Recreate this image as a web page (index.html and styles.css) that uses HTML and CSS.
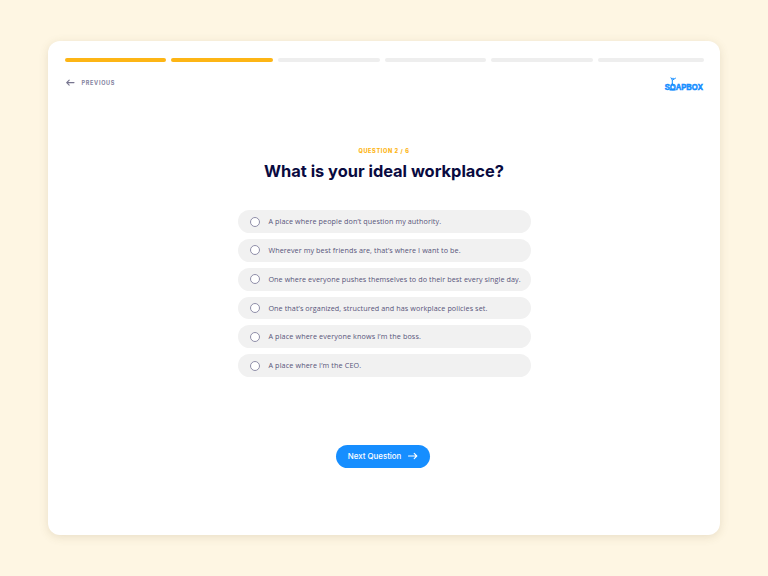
FILE: index.html
```html
<!DOCTYPE html>
<html lang="en">
<head>
<meta charset="utf-8">
<title>Soapbox quiz</title>
<link rel="stylesheet" href="styles.css">
</head>
<body>
<main class="card">
  <div class="progress">
    <span class="step done"></span><span class="step done"></span><span class="step"></span><span class="step"></span><span class="step"></span><span class="step"></span>
  </div>
  <header class="topbar">
    <a class="previous">
      <svg width="9" height="8" viewBox="0 0 9 8"><path d="M8 3.6H.7M3.2 1.1.7 3.6l2.5 2.5"/></svg>
      <span>PREVIOUS</span>
    </a>
    <svg class="logo" width="40" height="18" viewBox="0 0 40 18" role="img" aria-label="Soapbox">
      <text x="0.7" y="14.4" textLength="38.2" lengthAdjust="spacingAndGlyphs">SOAPBOX</text>
      <path d="M5.6 12.9h6v1.7h-6z"/>
      <circle cx="9" cy="2.5" r=".8"/>
      <path class="arms" d="M8.3 8V4L7 1.8M8.6 4l2.9-1.8M8.3 7.5l-.9 2.5M8.5 7.5l.9 2.5"/>
    </svg>
  </header>
  <p class="counter">QUESTION 2 / 6</p>
  <h1>What is your ideal workplace?</h1>
  <div class="options">
    <div class="option"><i></i><span>A place where people don’t question my authority.</span></div>
    <div class="option"><i></i><span>Wherever my best friends are, that’s where I want to be.</span></div>
    <div class="option"><i></i><span>One where everyone pushes themselves to do their best every single day.</span></div>
    <div class="option"><i></i><span>One that’s organized, structured and has workplace policies set.</span></div>
    <div class="option loose"><i></i><span>A place where everyone knows I’m the boss.</span></div>
    <div class="option loose"><i></i><span>A place where I’m the CEO.</span></div>
  </div>
  <button class="next"><span>Next Question</span>
    <svg width="10" height="8" viewBox="0 0 10 8"><path d="M.5 4h8.3M6.2 1.4 8.8 4 6.2 6.6"/></svg>
  </button>
</main>
</body>
</html>
```

FILE: styles.css
```css
* { box-sizing: border-box; }
body {
  margin: 0;
  height: 576px;
  padding: 41px 48px;
  background: #fef6e3;
  font-family: "Open Sans", sans-serif;
}
.card {
  display: flex;
  flex-direction: column;
  align-items: center;
  height: 494px;
  padding: 16.5px 16.5px 0;
  border-radius: 12px;
  background: #fff;
  box-shadow: 0 2px 10px rgba(120, 100, 50, .16);
}
.progress {
  display: grid;
  grid-template-columns: repeat(5, 101.7px) 1fr;
  gap: 5px;
  width: 100%;
}
.step { height: 4px; border-radius: 2px; background: #eee; }
.done { background: #fdb515; }
.topbar {
  display: flex;
  justify-content: space-between;
  width: 100%;
  height: 16px;
  margin-top: 14.5px;
}
.previous {
  display: flex;
  align-items: center;
  gap: 6.5px;
  height: 13px;
  padding-left: 1.5px;
  color: #8483a0;
  font: 700 5.5px/8px Inter, sans-serif;
  letter-spacing: .7px;
}
svg path { fill: none; stroke: #77758f; stroke-width: 1.1; stroke-linecap: round; stroke-linejoin: round; }
.logo { overflow: visible; }
.logo text { fill: #168eff; stroke: #168eff; stroke-width: .6; font: 700 9px "Liberation Sans", sans-serif; }
.logo circle, .logo path { fill: #168eff; stroke: none; }
.logo .arms { fill: none; stroke: #168eff; stroke-width: 1; }
.counter {
  margin: 53.5px 0 0;
  color: #fdb515;
  font: 800 5.6px/10px Inter, sans-serif;
  letter-spacing: .6px;
}
h1 {
  margin: 3px 0 0;
  color: #090a40;
  font: 700 16.4px/24px Inter, sans-serif;
  letter-spacing: -.01px;
  white-space: nowrap;
}
.options { display: grid; gap: 5.9px; width: 293.5px; margin: 27.7px 0 0 1px; }
.option {
  display: flex;
  align-items: center;
  gap: 8.7px;
  height: 22.9px;
  padding-left: 12px;
  border-radius: 12px;
  background: #f1f1f1;
  color: #57547a;
  font-size: 7.2px;
  line-height: 10px;
  letter-spacing: .09px;
  white-space: nowrap;
}
.option span { margin-top: -.6px; }
.loose { letter-spacing: .13px; }
.option i { width: 10px; height: 10px; border: 1px solid #908fa9; border-radius: 50%; background: #fff; }
.next {
  display: flex;
  align-items: center;
  gap: 7px;
  width: 94px;
  height: 23px;
  margin: 67.6px 1.6px 0 0;
  padding: 0 0 0 11.5px;
  border: 0;
  border-radius: 12px;
  background: #168eff;
  color: #fff;
  font: 500 7.9px/12px Inter, sans-serif;
  white-space: nowrap;
}
.next path { stroke: #fff; }
```
